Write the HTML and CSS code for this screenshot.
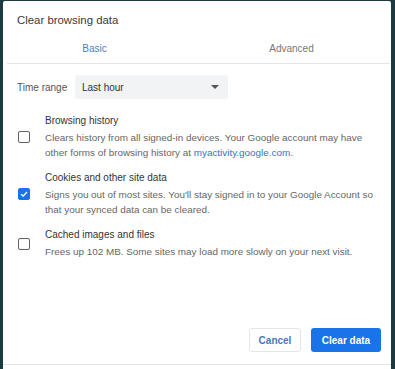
FILE: index.html
```html
<!DOCTYPE html>
<html>
<head>
<meta charset="utf-8">
<link rel="stylesheet" href="styles.css">
</head>
<body>
<div class="frame">
  <div class="dialog">
    <div class="title">Clear browsing data</div>
    <div class="tabs">
      <div class="tab active">Basic</div>
      <div class="tab">Advanced</div>
    </div>
    <div class="content">
      <div class="range">
        <span class="range-label">Time range</span>
        <div class="select"><span>Last hour</span><span class="caret"></span></div>
      </div>
      <div class="item first">
        <div class="box"></div>
        <div class="text">
          <div class="item-title">Browsing history</div>
          <div class="item-desc">Clears history from all signed-in devices. Your Google account may have other forms of browsing history at <span class="link">myactivity.google.com</span>.</div>
        </div>
      </div>
      <div class="item">
        <div class="box checked"><svg viewBox="0 0 12 12" width="12" height="12"><path d="M2.6 6.2 L5 8.5 L9.6 3.6" fill="none" stroke="#fff" stroke-width="1.6"/></svg></div>
        <div class="text">
          <div class="item-title">Cookies and other site data</div>
          <div class="item-desc">Signs you out of most sites. You'll stay signed in to your Google Account so that your synced data can be cleared.</div>
        </div>
      </div>
      <div class="item">
        <div class="box"></div>
        <div class="text">
          <div class="item-title">Cached images and files</div>
          <div class="item-desc">Frees up 102 MB. Some sites may load more slowly on your next visit.</div>
        </div>
      </div>
    </div>
    <div class="actions">
      <button class="btn cancel">Cancel</button>
      <button class="btn primary">Clear data</button>
    </div>
    <div class="footer"></div>
  </div>
</div>
</body>
</html>
```
FILE: styles.css
```css
html, body {
  margin: 0;
  padding: 0;
  background: #1d3a40;
  font-family: "Liberation Sans", Arial, sans-serif;
}
.frame {
  width: 395px;
  height: 369px;
  padding: 1px 4px 0 3px;
  box-sizing: border-box;
  overflow: hidden;
}
.dialog {
  background: #fff;
  height: 380px;
  border-radius: 2px;
  display: flex;
  flex-direction: column;
}
.title {
  font-size: 11.4px;
  color: #3a3a3a;
  padding: 13px 0 0 14px;
  height: 20px;
}
.tabs {
  display: flex;
  height: 29px;
  border-bottom: 1px solid #e6e6e6;
  margin: 0 1px 0 4px;
}
.tab {
  flex: 1;
  text-align: center;
  font-size: 10px;
  color: #777;
  padding-top: 9px;
}
.tab.active {
  color: #4a80c4;
  margin-left: -11px;
}
.content {
  padding: 11px 0 0 14px;
}
.range {
  display: flex;
  align-items: center;
  height: 24px;
}
.range-label {
  font-size: 10px;
  color: #555;
  width: 58px;
}
.select {
  width: 153px;
  height: 24px;
  background: #f1f3f4;
  border-radius: 3px;
  display: flex;
  align-items: center;
  justify-content: space-between;
  padding: 0 9px 0 7px;
  box-sizing: border-box;
  font-size: 10px;
  color: #333;
}
.caret {
  width: 0;
  height: 0;
  border-left: 4px solid transparent;
  border-right: 4px solid transparent;
  border-top: 4px solid #555;
}
.item {
  display: flex;
  align-items: center;
  margin-top: 11px;
}
.item.first { margin-top: 15px; }
.box {
  width: 10px;
  height: 10px;
  border: 1.5px solid #5f6368;
  border-radius: 2px;
  flex: none;
  margin: 0 15px 0 1px;
  display: flex;
  align-items: center;
  justify-content: center;
}
.box.checked {
  background: #1a73e8;
  border-color: #1a73e8;
}
.text {
  flex: 1;
  padding-right: 10px;
}
.item-title {
  font-size: 10px;
  color: #333;
  line-height: 14px;
}
.item-desc {
  font-size: 9.9px;
  color: #666;
  line-height: 15px;
  margin-top: 2px;
}
.link { color: #3b6fc0; }
.actions {
  display: flex;
  justify-content: flex-end;
  gap: 10px;
  padding: 0 10px 0 0;
  margin-top: auto;
  margin-bottom: 12px;
}
.btn {
  font-family: "Liberation Sans", Arial, sans-serif;
  font-size: 10px;
  font-weight: 700;
  height: 24px;
  border-radius: 3px;
  cursor: pointer;
}
.cancel {
  width: 52px;
  background: #fff;
  color: #4a77b8;
  border: 1px solid #e3e6ea;
}
.primary {
  width: 70px;
  background: #1a73e8;
  color: #fff;
  border: none;
}
.footer {
  height: 5px;
  border-top: 1px solid #e4e4e4;
  margin-bottom: 11px;
}
```
